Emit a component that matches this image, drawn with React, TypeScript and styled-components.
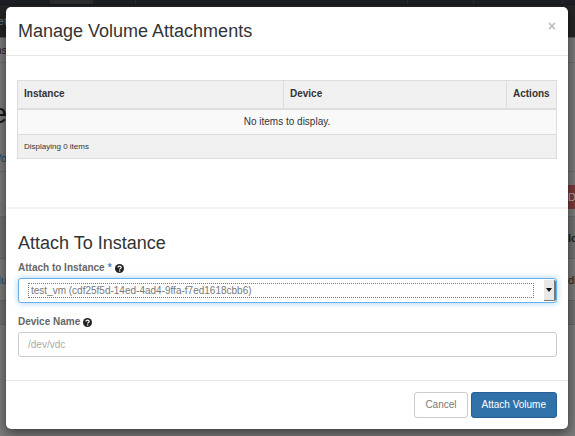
import React from "react";
import styled, { createGlobalStyle } from "styled-components";

const GlobalStyle = createGlobalStyle`
  *, *::before, *::after { box-sizing: border-box; }
  body {
    margin: 0;
    background: #7a7a7a;
    color: #333;
    font-family: "Liberation Sans", Arial, Helvetica, sans-serif;
    font-size: 10px;
    line-height: 16px;
  }
`;

const Screen = styled.div`
  position: relative;
  min-height: 100vh;
  overflow: hidden;
`;

const Backdrop = styled.div`
  position: absolute;
  inset: 0;
  overflow: hidden;
`;

const NavBar = styled.div`
  display: flex;
  height: 5px;
  background: #1c2024;
  border-bottom: 1px solid #151719;
`;

const NavItem = styled.div<{ $width: number; $active?: boolean }>`
  width: ${(p) => p.$width}px;
  background: ${(p) => (p.$active ? "#2d2e30" : "transparent")};
  border-right: 1px solid #2a2d30;
`;

const Strip = styled.div<{ $height: number; $top?: number; $bg?: string; $line?: string }>`
  display: flex;
  justify-content: space-between;
  align-items: center;
  height: ${(p) => p.$height}px;
  padding-top: ${(p) => p.$top ?? 0}px;
  background: ${(p) => p.$bg ?? "#7a7a7a"};
  border-bottom: 1px solid ${(p) => p.$line ?? "transparent"};
`;

const Edge = styled.div<{ $color?: string; $size?: number; $bold?: boolean; $right?: boolean; $bg?: string }>`
  display: flex;
  align-items: center;
  justify-content: ${(p) => (p.$right ? "flex-start" : "flex-end")};
  width: 7px;
  height: 24px;
  overflow: hidden;
  color: ${(p) => p.$color ?? "#222"};
  background: ${(p) => p.$bg ?? "transparent"};
  font-size: ${(p) => p.$size ?? 11}px;
  line-height: 24px;
  font-weight: ${(p) => (p.$bold ? "bold" : "normal")};
`;

const Dialog = styled.section`
  position: relative;
  margin: 7px 7px 7px 6px;
  background: #fff;
  border-radius: 5px;
  box-shadow: 0 4px 12px rgba(0, 0, 0, 0.5), 0 0 1px rgba(0, 0, 0, 0.4);
`;

const Header = styled.header`
  display: flex;
  justify-content: space-between;
  align-items: flex-start;
  padding: 12px;
  height: 49px;
  border-bottom: 1px solid #e5e5e5;
`;

const Heading = styled.h3`
  margin: 0;
  font-size: 18px;
  line-height: 24px;
  font-weight: normal;
`;

const Close = styled.button`
  padding: 0;
  border: 0;
  background: none;
  color: #c0c0c0;
  font: bold 14px/14px "Liberation Sans", Arial, sans-serif;
`;

const Body = styled.div`
  padding: 24px 11px 48px;
`;

const Table = styled.table`
  width: 100%;
  table-layout: fixed;
  border-collapse: collapse;
  border: 1px solid #ddd;
`;

const Th = styled.th<{ $width?: number }>`
  width: ${(p) => (p.$width ? `${p.$width}px` : "auto")};
  height: 28px;
  padding: 0 6px;
  text-align: left;
  background: #f0f0f0;
  border: 1px solid #ddd;
  border-bottom-width: 2px;
`;

const Empty = styled.td`
  height: 26px;
  padding: 0;
  text-align: center;
  background: #f9f9f9;
`;

const Foot = styled.td`
  height: 24px;
  padding: 0 6px;
  font-size: 8px;
  line-height: 12px;
  background: #f0f0f0;
  border-top: 1px solid #ddd;
`;

const Form = styled.form`
  border-top: 2px solid #f4f4f4;
`;

const Fields = styled.div`
  padding: 22px 11px 23px 12px;
`;

const Label = styled.label`
  display: flex;
  align-items: center;
  gap: 3px;
  height: 16px;
  margin: 5px 0 2px;
  color: #666;
  font-weight: bold;
`;

const Star = styled.span`
  color: #428bca;
`;

const SelectFrame = styled.div`
  display: flex;
  align-items: center;
  justify-content: space-between;
  height: 25px;
  margin-bottom: 11px;
  padding: 0 0 0 9px;
  border: 1px solid #66afe9;
  border-radius: 3px;
  box-shadow: 0 0 6px rgba(102, 175, 233, 0.6);
`;

const Select = styled.select`
  appearance: none;
  flex: 1;
  min-width: 0;
  height: 15px;
  margin-right: 10px;
  padding: 0 2px;
  border: 1px dotted #777;
  border-radius: 0;
  outline: none;
  background: #fff;
  color: #777;
  font: 10px/13px "Liberation Sans", Arial, sans-serif;
`;

const Arrow = styled.span`
  display: flex;
  align-items: center;
  justify-content: center;
  width: 12px;
  height: 21px;
  background: #e8e8e6;
  border: solid #777;
  border-width: 0 2px 1px 0;
  border-radius: 0 2px 2px 0;
`;

const Input = styled.input`
  display: block;
  width: 100%;
  height: 25px;
  padding: 0 9px;
  border: 1px solid #ccc;
  border-radius: 3px;
  color: #555;
  font: 10px/16px "Liberation Sans", Arial, sans-serif;
  &::placeholder { color: #aaa; opacity: 1; }
`;

const Footer = styled.footer`
  display: flex;
  justify-content: flex-end;
  gap: 3px;
  padding: 11px;
  border-top: 1px solid #e5e5e5;
`;

const Button = styled.button<{ $primary?: boolean }>`
  height: 26px;
  padding: 0 10px;
  border: 1px solid ${(p) => (p.$primary ? "#265f95" : "#ccc")};
  border-radius: 3px;
  background: ${(p) => (p.$primary ? "#3071a9" : "#fff")};
  color: ${(p) => (p.$primary ? "#fff" : "#777")};
  font: 10px/16px "Liberation Sans", Arial, sans-serif;
`;

const HelpIcon = () => (
  <svg width="9" height="9" viewBox="0 0 18 18" aria-hidden="true">
    <circle cx="9" cy="9" r="9" fill="#222" />
    <path d="M5.8 7C5.8 3.2 12.4 3.2 12.4 6.8C12.4 9 9.2 8.8 9.2 11.2" fill="none" stroke="#fff" strokeWidth="2.4" />
    <rect x="8" y="12.6" width="2.5" height="2.5" fill="#fff" />
  </svg>
);

export default function App() {
  return (
    <Screen>
      <GlobalStyle />
      <Backdrop aria-hidden="true">
        <NavBar>
          <NavItem $width={51} />
          <NavItem $width={42} $active />
          <NavItem $width={43} />
          <NavItem $width={272} />
          <NavItem $width={66} />
          <NavItem $width={89} />
        </NavBar>
        <Strip $height={33} $bg="#222425" $line="#555"><Edge $color="#777">et</Edge></Strip>
        <Strip $height={25} $line="#6c6c6c"><Edge>ns</Edge></Strip>
        <Strip $height={82} $top={20}><Edge $size={28} $color="#151515">e</Edge></Strip>
        <Strip $height={27} $line="#6a6a6a"><Edge $color="#21496b">Vo</Edge></Strip>
        <Strip $height={45} $top={6} $line="#6a6a6a"><Edge /><Edge $right $bg="#7a3938" $color="#aaa">De</Edge></Strip>
        <Strip $height={42} $bg="#707070" $line="#646464"><Edge /><Edge $right $bold>lo</Edge></Strip>
        <Strip $height={42} $line="#646464"><Edge $color="#21496b">lu</Edge><Edge $right>dit</Edge></Strip>
        <Strip $height={24} $bg="#707070" $line="#646464" />
      </Backdrop>
      <Dialog role="dialog" aria-labelledby="dialog-title">
        <Header>
          <Heading id="dialog-title">Manage Volume Attachments</Heading>
          <Close type="button" aria-label="Close">×</Close>
        </Header>
        <Body>
          <Table>
            <thead>
              <tr>
                <Th>Instance</Th>
                <Th $width={223}>Device</Th>
                <Th $width={50}>Actions</Th>
              </tr>
            </thead>
            <tbody>
              <tr><Empty colSpan={3}>No items to display.</Empty></tr>
            </tbody>
            <tfoot>
              <tr><Foot colSpan={3}>Displaying 0 items</Foot></tr>
            </tfoot>
          </Table>
        </Body>
        <Form onSubmit={(e) => e.preventDefault()}>
          <Fields>
            <Heading>Attach To Instance</Heading>
            <Label htmlFor="instance">
              Attach to Instance <Star>*</Star> <HelpIcon />
            </Label>
            <SelectFrame>
              <Select id="instance">
                <option>test_vm (cdf25f5d-14ed-4ad4-9ffa-f7ed1618cbb6)</option>
              </Select>
              <Arrow aria-hidden="true">
                <svg width="6" height="4" viewBox="0 0 6 4"><path d="M0 0h6L3 4z" fill="#111" /></svg>
              </Arrow>
            </SelectFrame>
            <Label htmlFor="device">Device Name <HelpIcon /></Label>
            <Input id="device" type="text" placeholder="/dev/vdc" />
          </Fields>
          <Footer>
            <Button type="button">Cancel</Button>
            <Button type="submit" $primary>Attach Volume</Button>
          </Footer>
        </Form>
      </Dialog>
    </Screen>
  );
}
